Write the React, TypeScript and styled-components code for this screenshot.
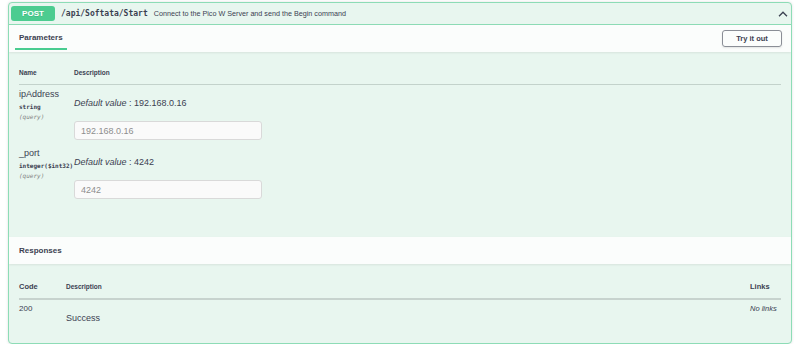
import React from "react";
import styled, { createGlobalStyle } from "styled-components";

const GlobalStyle = createGlobalStyle`
  html, body {
    margin: 0;
    padding: 0;
    background: #ffffff;
  }
  body {
    font-family: "Liberation Sans", Arial, sans-serif;
    color: #3b4151;
  }
`;

const MONO = `"DejaVu Sans Mono", "Liberation Mono", monospace`;

const Page = styled.div`
  padding: 2px 8px 0;
`;

const OpBlock = styled.div`
  border: 1px solid #8ddcb6;
  border-radius: 4px;
  background: #e8f6ef;
  box-shadow: 0 0 3px rgba(0, 0, 0, 0.12);
  overflow: hidden;
`;

const Summary = styled.div`
  height: 21px;
  display: flex;
  align-items: center;
  padding: 0 2px;
  border-bottom: 1px solid #8ddcb6;
`;

const Method = styled.span`
  width: 44px;
  height: 15px;
  border-radius: 3px;
  background: #4ccc90;
  color: #ffffff;
  font-weight: 700;
  font-size: 8px;
  display: flex;
  align-items: center;
  justify-content: center;
  text-shadow: 0 1px 0 rgba(0, 0, 0, 0.1);
`;

const Path = styled.span`
  margin-left: 6px;
  font-family: ${MONO};
  font-weight: 700;
  font-size: 8px;
  color: #3b4151;
`;

const OpSummaryText = styled.span`
  margin-left: 6px;
  font-size: 7.2px;
  color: #3b4151;
  flex: 1;
`;

const Chevron = styled.svg`
  width: 10px;
  height: 6px;
  margin-right: 1px;
`;

const SectionHeader = styled.div`
  height: 27px;
  display: flex;
  align-items: center;
  justify-content: space-between;
  padding: 0 9px 0 6px;
  background: rgba(255, 255, 255, 0.8);
  box-shadow: 0 1px 2px rgba(0, 0, 0, 0.08);
  position: relative;
`;

const Tab = styled.div`
  align-self: flex-start;
  height: 21px;
  padding: 2px 4px 0;
  display: flex;
  align-items: center;
  border-bottom: 2px solid #49cc90;
  font-size: 8px;
  font-weight: 700;
`;

const Title = styled.div`
  padding-left: 4px;
  font-size: 8px;
  font-weight: 700;
`;

const TryButton = styled.button`
  width: 60px;
  height: 17px;
  padding: 0;
  border: 1px solid #8a8e96;
  border-radius: 3px;
  background: transparent;
  font-family: "Liberation Sans", Arial, sans-serif;
  font-size: 7.5px;
  font-weight: 700;
  color: #3b4151;
  box-shadow: 0 1px 2px rgba(0, 0, 0, 0.1);
`;

const ParamsBody = styled.div`
  padding: 17px 10px 34px;
`;

const ParamsHead = styled.div`
  display: grid;
  grid-template-columns: 55px 1fr;
  height: 8px;
  line-height: 8px;
  padding-bottom: 7px;
  border-bottom: 1px solid #c3d2cb;
  font-size: 6.5px;
  font-weight: 700;
`;

const ParamRow = styled.div`
  display: grid;
  grid-template-columns: 55px 1fr;
  padding: 4px 0;
`;

const NameCol = styled.div`
  white-space: nowrap;
`;

const ParamName = styled.div`
  font-size: 9px;
  line-height: 11px;
`;

const ParamType = styled.div`
  margin-top: 3px;
  font-family: ${MONO};
  font-size: 6px;
  font-weight: 700;
  line-height: 8px;
`;

const ParamIn = styled.div`
  margin-top: 2px;
  font-family: ${MONO};
  font-size: 6px;
  font-style: italic;
  line-height: 8px;
  color: #808080;
`;

const DescCol = styled.div`
  padding-top: 9px;
`;

const DefaultValue = styled.div`
  font-size: 9px;
  line-height: 11px;
  white-space: nowrap;
  em {
    font-style: italic;
  }
`;

const ParamInput = styled.input`
  display: block;
  box-sizing: border-box;
  margin-top: 12px;
  width: 188px;
  height: 19px;
  padding: 0 6px;
  border: 1px solid #d9d9d9;
  border-radius: 3px;
  background: #fafafa;
  font-family: "Liberation Sans", Arial, sans-serif;
  font-size: 9px;
  &::placeholder {
    color: #8e8e8e;
  }
`;

const ResponsesBody = styled.div`
  padding: 18px 10px 20px;
`;

const RespGrid = styled.div`
  display: grid;
  grid-template-columns: 47px 1fr 31px;
`;

const RespHeadCell = styled.div<{ $small?: boolean }>`
  height: 9px;
  line-height: 9px;
  padding-bottom: 7px;
  border-bottom: 2px solid #c7d3ce;
  font-weight: 700;
  font-size: ${(p) => (p.$small ? "6.5px" : "7.5px")};
`;

const RespCell = styled.div`
  padding-top: 4px;
  font-size: 8px;
  line-height: 10px;
`;

const Success = styled.div`
  margin-top: 9px;
  font-size: 9px;
  line-height: 10px;
`;

const NoLinks = styled.span`
  font-style: italic;
  font-size: 7.5px;
  white-space: nowrap;
`;

type Param = { name: string; type: string; def: string };

const params: Param[] = [
  { name: "ipAddress", type: "string", def: "192.168.0.16" },
  { name: "_port", type: "integer($int32)", def: "4242" },
];

export default function App() {
  return (
    <>
      <GlobalStyle />
      <Page>
        <OpBlock>
          <Summary>
            <Method>POST</Method>
            <Path>/api/Softata/Start</Path>
            <OpSummaryText>Connect to the Pico W Server and send the Begin command</OpSummaryText>
            <Chevron viewBox="0 0 10 6">
              <path d="M1 5.2 L5 1.2 L9 5.2" fill="none" stroke="#3b4151" strokeWidth="1.3" />
            </Chevron>
          </Summary>

          <SectionHeader>
            <Tab>Parameters</Tab>
            <TryButton>Try it out</TryButton>
          </SectionHeader>

          <ParamsBody>
            <ParamsHead>
              <div>Name</div>
              <div>Description</div>
            </ParamsHead>
            {params.map((p) => (
              <ParamRow key={p.name}>
                <NameCol>
                  <ParamName>{p.name}</ParamName>
                  <ParamType>{p.type}</ParamType>
                  <ParamIn>(query)</ParamIn>
                </NameCol>
                <DescCol>
                  <DefaultValue>
                    <em>Default value</em> : {p.def}
                  </DefaultValue>
                  <ParamInput placeholder={p.def} disabled />
                </DescCol>
              </ParamRow>
            ))}
          </ParamsBody>

          <SectionHeader>
            <Title>Responses</Title>
          </SectionHeader>

          <ResponsesBody>
            <RespGrid>
              <RespHeadCell>Code</RespHeadCell>
              <RespHeadCell $small>Description</RespHeadCell>
              <RespHeadCell>Links</RespHeadCell>
              <RespCell>200</RespCell>
              <RespCell>
                <Success>Success</Success>
              </RespCell>
              <RespCell>
                <NoLinks>No links</NoLinks>
              </RespCell>
            </RespGrid>
          </ResponsesBody>
        </OpBlock>
      </Page>
    </>
  );
}
